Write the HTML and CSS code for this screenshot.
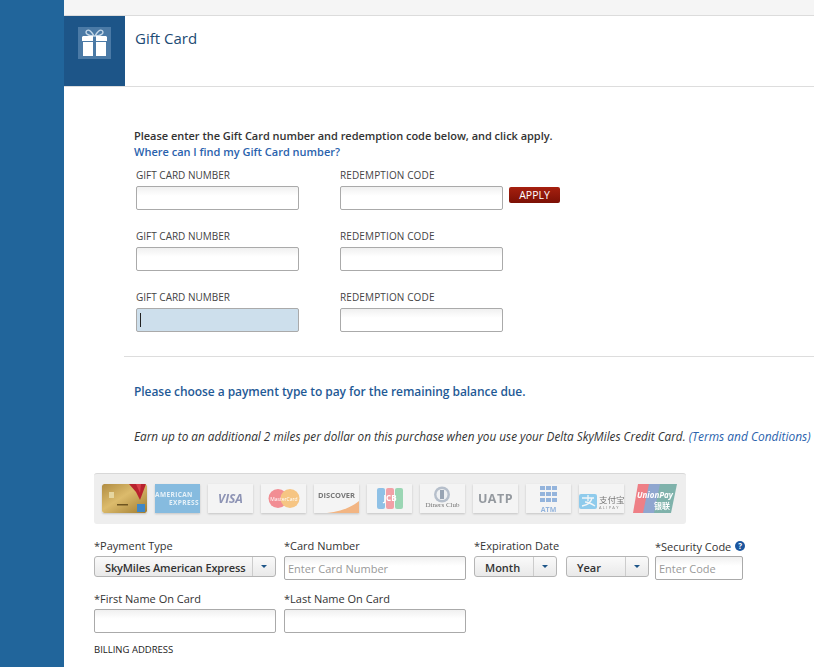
FILE: index.html
```html
<!DOCTYPE html>
<html lang="en">
<head>
<meta charset="utf-8">
<title>Gift Card</title>
<link rel="stylesheet" href="styles.css">
</head>
<body>
<div class="page">
  <aside class="sidebar"></aside>
  <main class="main">
    <div class="strip"></div>
    <header class="head">
      <div class="head-icon">
        <div class="gift">
          <svg width="33" height="32" viewBox="0 0 33 32">
            <path d="M16 9C14 5 11 2 9 3.500 6.500 5.500 9 9 16 9zM17 9c2-4 5-7 7-5.500 2.500 2 0 5.500-7 5.500z" fill="none" stroke="#c5d8e8" stroke-width="1.400"/>
            <path d="M5 9h10v5H4v-4zM18 9h10l1 1v4H18zM5 15h10v14H5zM18 15h10v14H18z" fill="#fff"/>
          </svg>
        </div>
      </div>
      <h1 class="head-title">Gift Card</h1>
    </header>

    <section class="gift-form">
      <p class="intro">Please enter the Gift Card number and redemption code below, and click apply.</p>
      <a class="find-link">Where can I find my Gift Card number?</a>
      <div class="gc-row">
        <label class="gc-field"><span class="gc-label">GIFT CARD NUMBER</span><span class="input gc-input"></span></label>
        <label class="gc-field"><span class="gc-label gc-label-code">REDEMPTION CODE</span><span class="input gc-input"></span></label>
        <button class="apply">APPLY</button>
      </div>
      <div class="gc-row">
        <label class="gc-field"><span class="gc-label">GIFT CARD NUMBER</span><span class="input gc-input"></span></label>
        <label class="gc-field"><span class="gc-label gc-label-code">REDEMPTION CODE</span><span class="input gc-input"></span></label>
      </div>
      <div class="gc-row">
        <label class="gc-field"><span class="gc-label">GIFT CARD NUMBER</span><span class="input gc-input focused"><i class="caret"></i></span></label>
        <label class="gc-field"><span class="gc-label gc-label-code">REDEMPTION CODE</span><span class="input gc-input"></span></label>
      </div>
    </section>

    <hr class="rule">

    <h2 class="choose">Please choose a payment type to pay for the remaining balance due.</h2>
    <p class="earn">Earn up to an additional 2 miles per dollar on this purchase when you use your Delta SkyMiles Credit Card. <a>(Terms and Conditions)</a></p>

    <div class="cards">
      <svg class="card card-gold" width="45" height="29" viewBox="0 0 45 29">
        <defs><linearGradient id="gold" x1="0" y1="0" x2="1" y2="1"><stop offset="0" stop-color="#b08c42"/><stop offset=".45" stop-color="#dcbb6c"/><stop offset="1" stop-color="#a07c30"/></linearGradient></defs>
        <rect width="45" height="29" rx="2" fill="url(#gold)"/>
        <path d="M27 0h17L38 16 34 8z" fill="#b8222e"/>
        <path d="M34 0h5l-1 9z" fill="#d8404a"/>
        <rect x="35" y="20" width="8" height="8" fill="#3f87c6"/>
        <rect x="7" y="8" width="5" height="6" fill="#e6d6a0"/>
        <rect x="15" y="20" width="11" height="1.500" fill="#6e5520"/>
      </svg>
      <div class="card card-amex"><span>AMERICAN</span><span class="amex-second">EXPRESS</span></div>
      <div class="card"><span class="visa">VISA</span></div>
      <svg class="card" width="45" height="29" viewBox="0 0 45 29">
        <circle cx="17" cy="14.500" r="9.500" fill="#f28d93"/><circle cx="29" cy="14.500" r="9.500" fill="#f6c583"/>
        <text x="23" y="17" text-anchor="middle" class="mc-text">MasterCard</text>
      </svg>
      <svg class="card" width="45" height="29" viewBox="0 0 45 29">
        <path d="M13 29C26 28 38 23 45 17v12z" fill="#f2b583"/>
        <text x="22.500" y="14" text-anchor="middle" class="disc-text">DISCOVER</text>
      </svg>
      <svg class="card" width="45" height="29" viewBox="0 0 45 29">
        <rect x="10" y="4" width="8" height="21" rx="2" fill="#8fc1e6"/>
        <rect x="19" y="4" width="8" height="21" rx="2" fill="#f2a0a6"/>
        <rect x="28" y="4" width="8" height="21" rx="2" fill="#9bd6b4"/>
        <text x="23" y="17" text-anchor="middle" class="jcb-text">JCB</text>
      </svg>
      <svg class="card" width="45" height="29" viewBox="0 0 45 29">
        <circle cx="22" cy="10.500" r="8" fill="#b6bfcb"/><circle cx="22" cy="10.500" r="5.500" fill="#eef0f2"/>
        <rect x="20" y="6" width="4" height="9" fill="#98a4b3"/>
        <text x="22.500" y="23" text-anchor="middle" class="diners-text">Diners Club</text>
      </svg>
      <div class="card"><span class="uatp">UATP</span></div>
      <svg class="card" width="45" height="29" viewBox="0 0 45 29">
        <g fill="#94b4dc">
          <rect x="14" y="2" width="5" height="4"/><rect x="20" y="2" width="5" height="4"/><rect x="26" y="2" width="5" height="4"/>
          <rect x="14" y="8" width="5" height="4"/><rect x="20" y="8" width="5" height="4"/><rect x="26" y="8" width="5" height="4"/>
          <rect x="14" y="14" width="5" height="4"/><rect x="20" y="14" width="5" height="4"/><rect x="26" y="14" width="5" height="4"/>
        </g>
        <text x="22.500" y="27.500" text-anchor="middle" class="atm-text">ATM</text>
      </svg>
      <svg class="card" width="45" height="29" viewBox="0 0 45 29">
        <rect x="0" y="10" width="18" height="15" rx="2" fill="#8fcbec"/>
        <path d="M3 14h12M9 11v6M3 22c5-1 9-3 10-8M6 18c3 0 7 2 10 4" stroke="#f2f6f8" stroke-width="1.300" fill="none"/>
        <text x="20" y="19" class="ali-cn">支付宝</text>
        <text x="20" y="25" class="ali-en">ALIPAY</text>
      </svg>
      <svg class="card card-up" width="45" height="29" viewBox="0 0 45 29">
        <path d="M6 0h13L12 29H1z" fill="#ee7f86"/>
        <path d="M17 0h13l-6 29H11z" fill="#8fa6cf"/>
        <path d="M28 0h17l-6 29H22z" fill="#7fb2ab"/>
        <text x="23" y="13.500" text-anchor="middle" class="up-text">UnionPay</text>
        <text x="30" y="24.500" text-anchor="middle" class="up-cn">银联</text>
      </svg>
    </div>

    <div class="pay-row pay-row-top">
      <div class="pay-field w-182">
        <span class="pay-label">*Payment Type</span>
        <div class="select w-182"><span class="select-text select-tight">SkyMiles American Express</span><span class="select-arrow"><i></i></span></div>
      </div>
      <div class="pay-field w-182">
        <span class="pay-label">*Card Number</span>
        <span class="input pay-input">Enter Card Number</span>
      </div>
      <div class="pay-field exp">
        <span class="pay-label">*Expiration Date</span>
        <div class="exp-selects">
          <div class="select w-83"><span class="select-text">Month</span><span class="select-arrow"><i></i></span></div>
          <div class="select w-83"><span class="select-text">Year</span><span class="select-arrow"><i></i></span></div>
        </div>
      </div>
      <div class="pay-field sec">
        <span class="pay-label sec-label">*Security Code <b class="help">?</b></span>
        <span class="input pay-input">Enter Code</span>
      </div>
    </div>

    <div class="pay-row pay-row-names">
      <div class="pay-field w-182">
        <span class="pay-label">*First Name On Card</span>
        <span class="input pay-input"></span>
      </div>
      <div class="pay-field w-182">
        <span class="pay-label">*Last Name On Card</span>
        <span class="input pay-input"></span>
      </div>
    </div>

    <h3 class="billing">BILLING ADDRESS</h3>
  </main>
</div>
</body>
</html>
```

FILE: styles.css
```css
html, body { margin: 0; padding: 0; height: 100%; overflow: hidden; background: #fff; }
body { font-family: "Open Sans", sans-serif; color: #333; }
.page { display: flex; min-height: 667px; }
.sidebar { width: 64px; flex: none; background: #21659b; }
.main { flex: 1; min-width: 0; overflow: hidden; }
.strip { height: 15px; background: #f5f5f5; border-bottom: 1px solid #dcdcdc; }
.head { display: flex; height: 70px; border-bottom: 1px solid #ddd; }
.head-icon { width: 61px; background: #1d5588; padding: 11px 0 0 14px; box-sizing: border-box; }
.gift { width: 33px; height: 32px; background: #4b7aa6; }
.gift svg { display: block; }
.head-title { margin: 13px 0 0 10px; font-size: 15px; line-height: 19px; font-weight: 400; color: #1c4a73; }
.gift-form { padding: 41px 0 0 70px; }
.intro { margin: 0; font-size: 11px; line-height: 16px; font-weight: 600; letter-spacing: -.026px; color: #333; white-space: nowrap; }
.find-link { display: block; font-size: 11px; line-height: 16px; font-weight: 600; color: #2a62ad; }
.gc-row { display: flex; align-items: flex-end; margin: 0 0 0 2px; height: 61px; }
.gc-row:first-of-type { height: 50px; }
.gc-field { display: block; width: 163px; margin-right: 41px; }
.gc-field + .gc-field { margin-right: 6px; }
.gc-label { display: block; font-size: 10px; line-height: 14px; margin-bottom: 4px; color: #444; white-space: nowrap; }
.gc-label-code { letter-spacing: .13px; }
.input { display: block; box-sizing: border-box; border: 1px solid #aaa; border-radius: 2px; background: linear-gradient(#f0f0f0, #fff 40%); }
.gc-input { width: 163px; height: 24px; }
.focused { background: #cddfec; position: relative; }
.caret { position: absolute; left: 3px; top: 4px; width: 1px; height: 14px; background: #222; }
.apply { width: 51px; height: 16px; margin-bottom: 7px; padding: 0; border: 0; border-radius: 2px; background: linear-gradient(#a6200f, #7c1005); color: #fff; font: 400 10.500px/16px "Open Sans", sans-serif; }
.rule { margin: 24px 0 0 60px; border: 0; border-top: 1px solid #ddd; }
.choose { margin: 26px 0 0 70px; font-size: 12px; line-height: 17px; font-weight: 600; letter-spacing: -.06px; color: #1f5a96; white-space: nowrap; }
.earn { height: 16px; margin: 28px 0 0 70px; font-size: 11.760px; line-height: 16px; font-style: italic; color: #333; white-space: nowrap; }
.earn a { color: #2a62ad; font-size: 11.950px; }
.cards { display: flex; gap: 8px; box-sizing: border-box; width: 592px; height: 51px; margin: 29px 0 0 30px; padding: 10px 0 0 8px; background: #eee; border-top: 1px solid #d8d8d8; border-radius: 3px; }
.card { display: flex; flex: none; align-items: center; justify-content: center; width: 45px; height: 29px; background: #f4f4f4; box-shadow: 0 1px 2px rgba(0,0,0,.18); filter: blur(.6px); }
.card-gold { border-radius: 2px; }
.card-up { background: none; box-shadow: none; }
.card-amex { flex-direction: column; align-items: stretch; gap: 1px; background: #86bbdf; color: #e6f1f8; font-size: 6.500px; font-weight: 700; line-height: 7px; letter-spacing: .4px; white-space: nowrap; text-align: left; overflow: hidden; }
.amex-second { text-align: right; padding-right: 1px; }
.visa { font-size: 12px; font-weight: 700; font-style: italic; color: #8d93b4; }
.uatp { font-size: 12.500px; font-weight: 700; color: #94999f; letter-spacing: .5px; }
.mc-text { font: 400 5px "Open Sans", sans-serif; fill: #fff; }
.disc-text { font: 700 7.500px "Open Sans", sans-serif; fill: #777; }
.jcb-text { font: 700 8px "Open Sans", sans-serif; fill: #fff; }
.diners-text { font: 400 7px "Liberation Serif", serif; fill: #777; }
.atm-text { font: 700 7px "Open Sans", sans-serif; fill: #94b4dc; }
.ali-cn { font: 400 8.500px "Noto Sans CJK SC", sans-serif; fill: #777; }
.ali-en { font: 400 4px "Open Sans", sans-serif; fill: #888; letter-spacing: 1.300px; }
.up-text { font: italic 700 8px "Open Sans", sans-serif; fill: #fff; }
.up-cn { font: 700 8px "Noto Sans CJK SC", sans-serif; fill: #fff; }
.pay-row { display: flex; gap: 8px; margin-left: 30px; }
.pay-row-top { margin-top: 14px; }
.pay-row-names { margin-top: 11px; }
.pay-field { display: block; flex: none; }
.w-182 { width: 182px; }
.pay-label { display: block; font-size: 11px; line-height: 16px; margin-bottom: 2px; color: #333; white-space: nowrap; }
.pay-input { width: 100%; height: 24px; padding-left: 3px; font-size: 11px; line-height: 24px; color: #999; white-space: nowrap; overflow: hidden; }
.select { display: flex; flex: none; box-sizing: border-box; height: 21px; border: 1px solid #b5b5b5; border-radius: 3px; background: linear-gradient(#fafafa, #e9e9e9); }
.select-text { flex: 1; padding-left: 10px; font-size: 11px; line-height: 22px; font-weight: 600; color: #333; white-space: nowrap; }
.select-tight { letter-spacing: -.125px; }
.select-arrow { display: flex; align-items: center; justify-content: center; width: 22px; border-left: 1px solid #ccc; }
.select-arrow i { width: 0; height: 0; border: 3px solid transparent; border-top: 3px solid #1d5588; border-bottom: 0; }
.exp { width: 173px; }
.exp-selects { display: flex; gap: 9px; }
.w-83 { width: 83px; }
.sec { width: 88px; margin-top: 1px; }
.sec-label { margin-bottom: 1px; }
.help { display: inline-block; width: 10px; height: 10px; margin-left: 1px; border-radius: 50%; background: #1b569f; color: #fff; font-size: 8px; line-height: 10px; text-align: center; vertical-align: 2px; }
.billing { margin: 10px 0 0 30px; font-size: 9.500px; line-height: 14px; font-weight: 400; color: #222; }
```
